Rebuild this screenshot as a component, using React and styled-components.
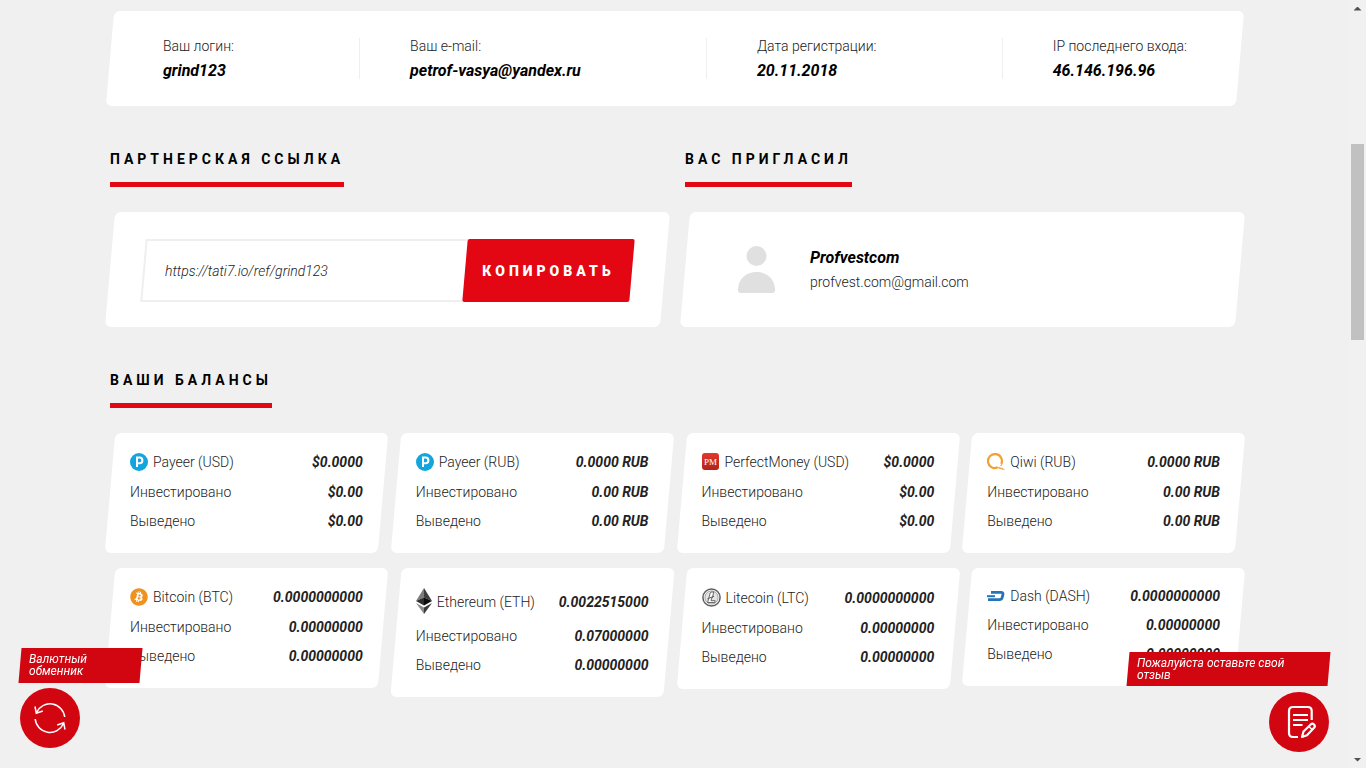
import React from "react";
import styled, { createGlobalStyle } from "styled-components";
import { FaBitcoin } from "react-icons/fa";

// icons
const PayeerIcon = () => (
  <svg width="18" height="18" viewBox="0 0 18 18">
    <circle cx="9" cy="9" r="9" fill="#12a5de" />
    <path d="M7 14V4.6h2.6a2.7 2.7 0 0 1 0 5.6H7.6" fill="none" stroke="#fff" strokeWidth="2" />
  </svg>
);

const PerfectIcon = () => (
  <svg width="18" height="18" viewBox="0 0 18 18">
    <defs>
      <linearGradient id="pm" x1="0" y1="0" x2="0" y2="1">
        <stop offset="0" stopColor="#e3392f" />
        <stop offset="1" stopColor="#b32019" />
      </linearGradient>
    </defs>
    <rect x="0" y="0" width="17" height="17" rx="3" fill="url(#pm)" />
    <text x="8.5" y="11.500" textAnchor="middle" fontSize="9" fontFamily="Liberation Serif, serif" fill="#fff">PM</text>
  </svg>
);

const QiwiIcon = () => (
  <svg width="18" height="18" viewBox="0 0 18 18" fill="none" stroke="#f4a02c">
    <path d="M10.500 14.600A7 7 0 1 1 14.300 11" strokeWidth="2.200" />
    <path d="M9 14c3 .1 4.500.5 5.600 1.200 1-.2 2 .4 2.900 1.500-1.800-.7-3-.3-4.500-1-1.500-.7-2.300-1-4-1.700z" fill="#f4a02c" strokeWidth=".4" />
    <path d="M13.800 12.800l1-1.500" strokeWidth="1.200" />
  </svg>
);

const EtherIcon = () => (
  <svg width="16" height="28" viewBox="0 0 16 28">
    <path d="M8 1L0 14l8-3.500z" fill="#7d7d7d" />
    <path d="M8 1l8 13-8-3.500z" fill="#3f3f3f" />
    <path d="M0 14l8-3.500V18.500z" fill="#2e2e2e" />
    <path d="M16 14l-8-3.500V18.500z" fill="#0d0d0d" />
    <path d="M0 16l8 4.500V27z" fill="#8a8a8a" />
    <path d="M16 16l-8 4.500V27z" fill="#3a3a3a" />
  </svg>
);

const LiteIcon = () => (
  <svg width="19" height="19" viewBox="0 0 19 19">
    <circle cx="9.500" cy="9.500" r="8.600" fill="#fff" stroke="#5e5e5e" strokeWidth="1.500" />
    <circle cx="9.500" cy="9.500" r="6.600" fill="#e4e4e4" stroke="#a5a5a5" strokeWidth="1" />
    <path d="M9 4h2.800l-1.500 5.800h-.5l-.8 2.900h4.200l-.4 1.800H5.600L8.200 5z" fill="#fff" stroke="#5a5a5a" strokeWidth=".9" />
    <path d="M5.500 10.800l6.500-2.600" stroke="#5a5a5a" strokeWidth="1" />
  </svg>
);

const DashIcon = () => (
  <svg width="18" height="12" viewBox="0 0 18 12" fill="none" stroke="#2573b8" strokeWidth="2.800">
    <path d="M4 2.400h10q2.400 0 1.900 2.200l-.7 2.900q-.5 2.100-2.900 2.100H1" />
    <path d="M0 6.200h8" strokeWidth="2" />
  </svg>
);

const Avatar = () => (
  <svg width="37" height="47" viewBox="0 0 37 47" fill="#e0e0e0">
    <circle cx="18.500" cy="10" r="10" />
    <path d="M3 47q-3 0-3-3C0 33 8 26 18.500 26S37 33 37 44q0 3-3 3z" />
  </svg>
);

const ExchangeIcon = () => (
  <svg width="60" height="60" viewBox="0 0 60 60" fill="none" stroke="#fff" strokeWidth="1.500">
    <path d="M44.700 29A14.800 14.800 0 0 0 16.500 24.500M15 18.500l1.300 6.700 6.500-2.200" />
    <path d="M15.200 31A14.800 14.800 0 0 0 43.500 35.500M45 41.500l-1.300-6.700-6.500 2.200" />
  </svg>
);

const ReviewIcon = () => (
  <svg width="60" height="60" viewBox="0 0 60 60" fill="none" stroke="#fff" strokeWidth="2.200">
    <path d="M42.700 28V19q0-4-4-4H24q-4 0-4 4v22q0 4 4 4h5" />
    <path d="M24 23h15M24 28h15M24 33h9.500" />
    <path d="M33 45l1.500-5.500 7.500-7.300q1.500-1.200 3 .3t.3 3L38 43.200z" strokeLinejoin="round" />
    <path d="M40 34.500l3 3" strokeWidth="1.500" />
  </svg>
);

const info = [
  { label: "Ваш логин:", value: "grind123" },
  { label: "Ваш e-mail:", value: "petrof-vasya@yandex.ru" },
  { label: "Дата регистрации:", value: "20.11.2018" },
  { label: "IP последнего входа:", value: "46.146.196.96" },
];

const balances = [
  { name: "Payeer (USD)", icon: <PayeerIcon />, head: 21, sum: "$0.0000", invested: "$0.00", paid: "$0.00" },
  { name: "Payeer (RUB)", icon: <PayeerIcon />, head: 21, sum: "0.0000 RUB", invested: "0.00 RUB", paid: "0.00 RUB" },
  { name: "PerfectMoney (USD)", icon: <PerfectIcon />, head: 21, sum: "$0.0000", invested: "$0.00", paid: "$0.00" },
  { name: "Qiwi (RUB)", icon: <QiwiIcon />, head: 21, sum: "0.0000 RUB", invested: "0.00 RUB", paid: "0.00 RUB" },
  { name: "Bitcoin (BTC)", icon: <FaBitcoin size={18} color="#f0921e" />, head: 21, sum: "0.0000000000", invested: "0.00000000", paid: "0.00000000" },
  { name: "Ethereum (ETH)", icon: <EtherIcon />, head: 30, sum: "0.0022515000", invested: "0.07000000", paid: "0.00000000" },
  { name: "Litecoin (LTC)", icon: <LiteIcon />, head: 22, sum: "0.0000000000", invested: "0.00000000", paid: "0.00000000" },
  { name: "Dash (DASH)", icon: <DashIcon />, head: 19, sum: "0.0000000000", invested: "0.00000000", paid: "0.00000000" },
];

const App = () => {
  return (
    <>
      <GlobalStyle />
      <Page>
        <Main>
          <Container>
            <InfoCard>
              {info.map((item) => (
                <InfoItem key={item.label}>
                  <Label>{item.label}</Label>
                  <Value>{item.value}</Value>
                </InfoItem>
              ))}
            </InfoCard>

            <Columns>
              <section>
                <Title>Партнерская ссылка</Title>
                <RefCard>
                  <RefField>
                    <input aria-label="Партнерская ссылка" defaultValue="https://tati7.io/ref/grind123" />
                  </RefField>
                  <CopyButton type="button">Копировать</CopyButton>
                </RefCard>
              </section>
              <section>
                <Title>Вас пригласил</Title>
                <InviterCard>
                  <Avatar />
                  <div>
                    <Value>Profvestcom</Value>
                    <Label>profvest.com@gmail.com</Label>
                  </div>
                </InviterCard>
              </section>
            </Columns>

            <section>
              <Title>Ваши балансы</Title>
              <Balances>
                {balances.map((b) => (
                  <BalanceCard key={b.name}>
                    <Row $height={b.head}>
                      <Currency>{b.icon}<Name>{b.name}</Name></Currency>
                      <Amount>{b.sum}</Amount>
                    </Row>
                    <Row>
                      <Name>Инвестировано</Name>
                      <Amount>{b.invested}</Amount>
                    </Row>
                    <Row>
                      <Name>Выведено</Name>
                      <Amount>{b.paid}</Amount>
                    </Row>
                  </BalanceCard>
                ))}
              </Balances>
            </section>
          </Container>
        </Main>

        <Scrollbar aria-hidden="true">
          <Arrow />
          <Thumb />
          <Arrow $down />
        </Scrollbar>
      </Page>

      <Exchange href="#exchange">
        <Tag>Валютный обменник</Tag>
        <Round><ExchangeIcon /></Round>
      </Exchange>
      <Review href="#review">
        <Tag>Пожалуйста оставьте свой отзыв</Tag>
        <Round><ReviewIcon /></Round>
      </Review>
    </>
  );
};

// style
const GlobalStyle = createGlobalStyle`
  * {
    box-sizing: border-box;
  }
  body {
    margin: 0;
    background: #f0f0f0;
    color: #222;
    font-family: Roboto, sans-serif;
    font-size: 14px;
    font-weight: 300;
    line-height: 19px;
  }
  svg {
    display: block;
    flex: none;
  }
`;
const Page = styled.div`
  display: flex;
  min-height: 100vh;
`;
const Main = styled.main`
  flex: 1;
  min-width: 0;
  padding: 11px 19px 60px 20px;
`;
const Container = styled.div`
  max-width: 1130px;
  margin: 0 auto;
`;
// slanted white panel, its content stays upright
const Card = styled.div`
  position: relative;
  z-index: 0;
  &::before {
    content: "";
    position: absolute;
    inset: 0;
    z-index: -1;
    background: #fff;
    border-radius: 6px;
    transform: skewX(-5deg);
  }
`;
const InfoCard = styled(Card)`
  display: flex;
  padding: 27px 53px;
`;
const InfoItem = styled.div`
  flex: 1 1 auto;
  & + & {
    padding-left: 50px;
    border-left: 1px solid #efefef;
  }
  &:last-child {
    flex: none;
  }
`;
const Label = styled.div`
  line-height: 17px;
  color: #222;
`;
const Value = styled.div`
  font-size: 16px;
  font-weight: 700;
  font-style: italic;
  line-height: 24px;
  color: #000;
  ${Label} + & {
    padding-top: 8px;
    line-height: 16px;
  }
`;
const Columns = styled.div`
  display: grid;
  grid-template-columns: 1fr 1fr;
  gap: 20px;
`;
const Title = styled.h2`
  width: fit-content;
  margin: 43px 0 25px;
  padding-bottom: 12px;
  border-bottom: 5px solid #e30613;
  color: #000;
  font-size: 14px;
  font-weight: 700;
  line-height: 21px;
  letter-spacing: 4px;
  text-transform: uppercase;
`;
const RefCard = styled(Card)`
  display: flex;
  height: 115px;
  padding: 27px 33px 25px;
`;
const RefField = styled.div`
  position: relative;
  flex: 1;
  &::before {
    content: "";
    position: absolute;
    inset: 0;
    border: 2px solid #efefef;
    border-right: 0;
    transform: skewX(-5deg);
  }
  input {
    position: relative;
    width: 100%;
    height: 100%;
    padding: 0 22px;
    border: 0;
    outline: 0;
    background: none;
    color: #222;
    font: italic 300 14px Roboto, sans-serif;
  }
`;
const CopyButton = styled.button`
  position: relative;
  z-index: 0;
  width: 167px;
  padding: 0;
  border: 0;
  background: none;
  color: #fff;
  font: 900 14px Roboto, sans-serif;
  letter-spacing: 4px;
  text-transform: uppercase;
  cursor: pointer;
  &::before {
    content: "";
    position: absolute;
    inset: 0;
    z-index: -1;
    background: #e30613;
    border-radius: 2px;
    transform: skewX(-5deg);
  }
`;
const InviterCard = styled(Card)`
  display: flex;
  align-items: center;
  gap: 35px;
  height: 115px;
  padding: 0 53px;
  ${Label} {
    line-height: 24px;
  }
`;
const Balances = styled.div`
  display: grid;
  grid-template-columns: repeat(4, 1fr);
  align-items: start;
  gap: 15px 13px;
`;
const BalanceCard = styled(Card)`
  padding: 18px 20px 13px;
`;
const Row = styled.div`
  display: flex;
  justify-content: space-between;
  align-items: center;
  height: ${(props) => props.$height || 19}px;
  margin-bottom: 10px;
`;
const Currency = styled.span`
  display: flex;
  align-items: center;
  gap: 5px;
`;
const Name = styled.span`
  padding-top: 2px;
`;
const Amount = styled.span`
  padding-top: 2px;
  font-weight: 700;
  font-style: italic;
`;
const Scrollbar = styled.div`
  position: sticky;
  top: 0;
  display: grid;
  grid-template-rows: 17px 127fr 196fr 411fr 17px;
  justify-items: center;
  align-items: center;
  width: 17px;
  height: 100vh;
  background: #f1f1f1;
`;
const Thumb = styled.div`
  grid-row: 3;
  width: 13px;
  height: 100%;
  background: #c1c1c1;
`;
const Arrow = styled.div`
  grid-row: ${(props) => (props.$down ? 5 : 1)};
  width: 8px;
  height: 4px;
  background: #505050;
  clip-path: ${(props) => (props.$down ? "polygon(0 0, 100% 0, 50% 100%)" : "polygon(50% 0, 100% 100%, 0 100%)")};
`;
// floating buttons
const Floating = styled.a`
  position: fixed;
  display: flex;
  flex-direction: column;
  color: #fff;
  text-decoration: none;
`;
const Tag = styled.span`
  position: relative;
  z-index: 0;
  padding: 5px 9px 6px;
  font-size: 12px;
  font-style: italic;
  font-weight: 400;
  line-height: 12px;
  &::before {
    content: "";
    position: absolute;
    inset: 0;
    z-index: -1;
    background: #d20611;
    transform: skewX(-5deg);
  }
`;
const Round = styled.span`
  width: 60px;
  height: 60px;
  border-radius: 50%;
  background: #d20611;
`;
const Exchange = styled(Floating)`
  left: 20px;
  bottom: 20px;
  gap: 5px;
  width: 121px;
  ${Tag} {
    padding-right: 40px;
  }
`;
const Review = styled(Floating)`
  right: 37px;
  bottom: 16px;
  gap: 6px;
  align-items: flex-end;
  width: 201px;
  ${Tag} {
    width: 100%;
    padding-right: 30px;
    padding-bottom: 5px;
  }
`;

export default App;
